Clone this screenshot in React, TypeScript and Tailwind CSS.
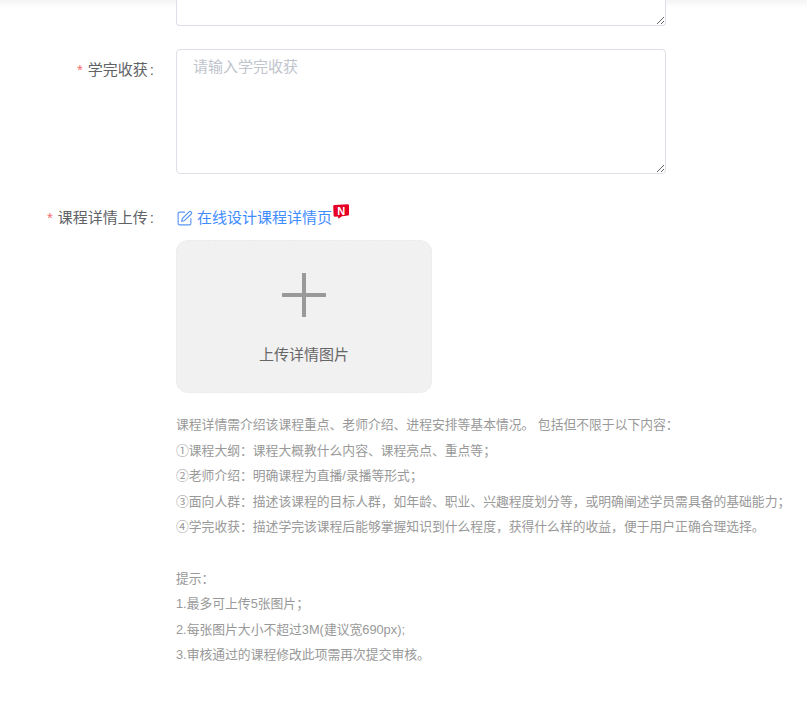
import { SquarePen } from 'lucide-react'

const hints = [
  '课程详情需介绍该课程重点、老师介绍、进程安排等基本情况。 包括但不限于以下内容：',
  '①课程大纲：课程大概教什么内容、课程亮点、重点等；',
  '②老师介绍：明确课程为直播/录播等形式；',
  '③面向人群：描述该课程的目标人群，如年龄、职业、兴趣程度划分等，或明确阐述学员需具备的基础能力；',
  '④学完收获：描述学完该课程后能够掌握知识到什么程度，获得什么样的收益，便于用户正确合理选择。',
  '',
  '提示：',
  '1.最多可上传5张图片；',
  '2.每张图片大小不超过3M(建议宽690px);',
  '3.审核通过的课程修改此项需再次提交审核。',
]

function Label({ text }: { text: string }) {
  return (
    <label className="flex h-[42px] w-[154px] shrink-0 items-center justify-end text-[15px] text-[#606266] whitespace-nowrap">
      <span className="mr-[5px] text-[#f56c6c]">*</span>
      {text}
      <span className="ml-[2px]">:</span>
    </label>
  )
}

export default function App() {
  return (
    <main className="relative min-h-[725px] bg-white font-['Liberation_Sans','Noto_Sans_CJK_SC',sans-serif]">
      <div className="absolute inset-x-0 top-0 h-2 bg-gradient-to-b from-[#f4f4f4] to-white" />

      <div className="flex">
        <div className="w-[176px] shrink-0" />
        <textarea
          readOnly
          className="relative block h-[26px] w-[490px] rounded-b border border-t-0 border-[#dcdfe6] bg-white outline-none resize-y"
        />
      </div>

      <div className="mt-[23px] flex">
        <Label text="学完收获" />
        <textarea
          readOnly
          placeholder="请输入学完收获"
          className="ml-[22px] block h-[125px] w-[490px] rounded border border-[#dcdfe6] bg-white px-4 py-[5px] text-[15px] leading-[24px] outline-none resize-y placeholder:text-[#c0c4cc]"
        />
      </div>

      <div className="mt-[23px] flex">
        <Label text="课程详情上传" />
        <div className="ml-[22px] flex-1">
          <div className="flex h-[42px] items-center text-[15px] text-[#3f8cff]">
            <SquarePen size={17} strokeWidth={1.6} className="mr-[4px] text-[#5a96f5]" />
            <span>在线设计课程详情页</span>
            <svg width="16" height="15" viewBox="0 0 16 15" className="mb-[13px] ml-[1px]">
              <path d="M1.5 1 14.5 0.2Q16 0.2 16 1.5V10.5Q16 11.5 15 11.6L9 12.2 5.5 14.8 5 12.6 2 12.8Q0.7 12.8 0.6 11.6L0.2 2.2Q0.2 1 1.5 1Z" fill="#e60026" />
              <text x="8.2" y="10.5" textAnchor="middle" fontSize="11" fontWeight="700" fill="#fff" fontFamily="Liberation Sans">
                N
              </text>
            </svg>
          </div>

          <div className="mt-[1px] flex h-[153px] w-[256px] flex-col items-center rounded-xl border border-dashed border-[#ebebeb] bg-[#f1f1f1]">
            <svg width="44" height="44" viewBox="0 0 44 44" className="mt-[32px]">
              <path d="M22 1V43M1 22H43" stroke="#999" strokeWidth="4" strokeLinecap="round" />
            </svg>
            <span className="mt-[26px] text-[15px] leading-[24px] text-[#666]">上传详情图片</span>
          </div>

          <div className="mt-[19px] text-[12.8px] leading-[25.6px] text-[#999] whitespace-nowrap">
            {hints.map((line, i) => (
              <p key={i} className="h-[25.6px]">{line}</p>
            ))}
          </div>
        </div>
      </div>
    </main>
  )
}
